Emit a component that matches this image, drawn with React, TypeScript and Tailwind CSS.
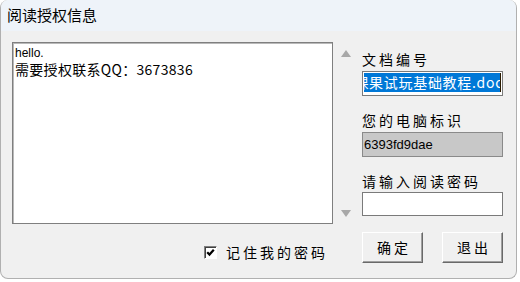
import React from "react";

const cjk = { fontFamily: '"Noto Sans CJK SC", "Liberation Sans", sans-serif' };
const latin = { fontFamily: '"Liberation Sans", "Noto Sans CJK SC", sans-serif' };

function Label({ children }: { children: React.ReactNode }) {
  return (
    <div className="h-[21px] text-[14px] leading-[21px] tracking-[3px] text-black" style={cjk}>
      {children}
    </div>
  );
}

function Arrow({ up }: { up?: boolean }) {
  return (
    <svg width="10" height="7" viewBox="0 0 10 7">
      <polygon points={up ? "5,0 10,7 0,7" : "0,0 10,0 5,7"} fill="#a8a8a8" />
    </svg>
  );
}

function Button({ children }: { children: React.ReactNode }) {
  return (
    <button
      className="flex h-[31px] w-[61px] items-center justify-center border border-t-white border-l-white border-r-[#696969] border-b-[#696969] bg-[#f0f0f0] pl-[3px] text-[14px] tracking-[3px] text-black shadow-[inset_-1px_-1px_0_#a0a0a0]"
      style={cjk}
    >
      {children}
    </button>
  );
}

export default function App() {
  return (
    <div className="h-[282px] w-[520px] bg-white">
      <div className="h-[279px] w-[517px] overflow-hidden rounded-[8px] border border-t-0 border-[#b0b0b0] bg-[#f0f0f0]">
        {/* title bar */}
        <div className="h-[31px] bg-[#eef3f9] pl-[6px] pt-[5px] text-[15px] leading-[20px] text-black" style={cjk}>
          阅读授权信息
        </div>

        {/* body */}
        <div className="pl-[11px] pt-[11px]">
          <div className="flex h-[182px]">
            <div className="h-[182px] w-[321px] border border-[#7f7f7f] bg-white px-[2px] pt-[2px] shadow-[inset_1px_1px_0_#b9b9b9]">
              <div className="text-[12px] leading-[16px] text-black" style={latin}>
                hello.
              </div>
              <div className="text-[14px] leading-[16px] tracking-[0.3px] text-black" style={cjk}>
                需要授权联系QQ：3673836
              </div>
            </div>

            <div className="flex w-[29px] flex-col items-center justify-between pb-[7px] pr-[4px] pt-[8px]">
              <Arrow up />
              <Arrow />
            </div>

            <div className="flex w-[141px] flex-col pt-[7px]">
              <Label>文档编号</Label>
              <div className="mt-[1px] flex h-[25px] items-start overflow-hidden border border-[#7a7a7a] bg-white px-[1px] pt-[1px]">
                <div className="flex h-[19px] w-full items-center justify-end overflow-hidden whitespace-nowrap bg-[#0078d7] text-[14px] leading-[19px] tracking-[0.7px] text-white" style={cjk}>
                  <span className="shrink-0">课果试玩基础教程.doc</span>
                  <span className="ml-[-3px] h-[19px] w-[1px] shrink-0 bg-[#2a1a00]" />
                </div>
              </div>

              <div className="mt-[14px]">
                <Label>您的电脑标识</Label>
              </div>
              <div className="mt-[1px] flex h-[25px] items-center border border-[#8a8a8a] bg-[#c8c8c8] pl-[1px] text-[13px] text-black" style={latin}>
                6393fd9dae
              </div>

              <div className="mt-[14px]">
                <Label>请输入阅读密码</Label>
              </div>
              <div className="h-[24px] border border-[#7a7a7a] bg-white" />
            </div>
          </div>

          <div className="mt-[8px] flex">
            <div className="ml-[192px] mt-[13px] flex h-[14px] items-center">
              <div className="flex h-[13px] w-[13px] items-center justify-center border border-t-[#808080] border-l-[#808080] border-b-white border-r-white bg-white shadow-[inset_1px_1px_0_#404040]">
                <svg width="9" height="9" viewBox="0 0 9 9">
                  <path d="M1.2 4.2 L3.5 6.6 L7.8 1.8" stroke="#000" strokeWidth="2.2" fill="none" />
                </svg>
              </div>
              <span className="ml-[9px] text-[14px] leading-[14px] tracking-[3px] text-black" style={cjk}>
                记住我的密码
              </span>
            </div>
            <div className="ml-[34px] flex gap-[19px]">
              <Button>确定</Button>
              <Button>退出</Button>
            </div>
          </div>
        </div>
      </div>
    </div>
  );
}
